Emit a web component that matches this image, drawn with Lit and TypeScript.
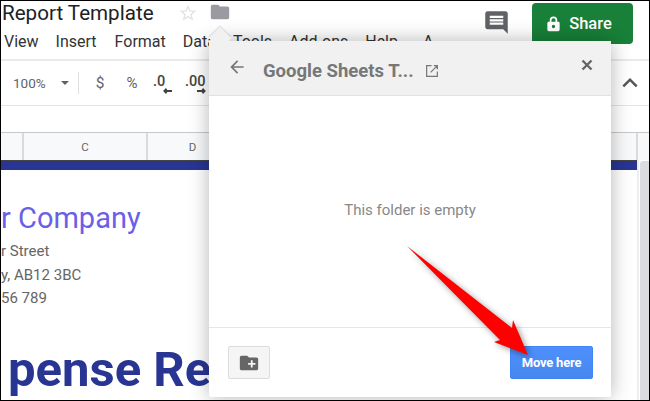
import { LitElement, html, css } from "lit";
import { customElement } from "lit/decorators.js";

@customElement("app-root")
export class AppRoot extends LitElement {
  static styles = css`
    :host { display: block; width: 650px; height: 401px; font-family: Roboto, "Liberation Sans", sans-serif; }
    .frame { position: relative; box-sizing: border-box; width: 650px; height: 401px; border: 1px solid #000; overflow: hidden; background: #fff; display: flex; flex-direction: column; }
    .head { height: 58px; display: flex; flex: none; }
    .head-left { flex: 1; min-width: 0; }
    .title-row { display: flex; align-items: center; height: 24px; }
    .title { font-size: 20.6px; color: #202124; margin-left: 1px; width: 176px; white-space: nowrap; line-height: 24px; }
    .star { width: 20px; height: 20px; color: #e3e3e3; }
    .folder { width: 22px; height: 22px; margin: -2px 0 0 11px; color: #9a9aa0; }
    .menu { display: flex; height: 32px; align-items: center; font-size: 16px; color: #333; white-space: nowrap; padding-top: 1px; box-sizing: border-box; }
    .menu span { flex: none; }
    .head-right { display: flex; flex: none; width: 166px; align-items: flex-start; }
    .comment { width: 27px; height: 27px; margin: 8px 22px 0 0; flex: none; color: #5f6368; }
    .share { flex: none; width: 101px; height: 41px; margin-top: 2px; border-radius: 4px; background: #188038; color: #fff; display: flex; align-items: center; justify-content: center; gap: 9px; font-size: 16.5px; font-weight: 500; box-sizing: border-box; padding-right: 6px; }
    .share svg { width: 13px; height: 16px; }
    .rule { height: 2px; background: #e8eaed; flex: none; }
    .toolbar { height: 44px; flex: none; display: flex; align-items: center; color: #5f6368; font-size: 14px; position: relative; }
    .tb { flex: none; text-align: center; }
    .zoom { margin-left: 12px; width: 36px; text-align: left; font-size: 13.5px; }
    .caret { margin-left: 12px; width: 0; height: 0; border-left: 4.5px solid transparent; border-right: 4.5px solid transparent; border-top: 4.5px solid #5f6368; }
    .sep { width: 1px; height: 22px; background: #e0e0e0; margin-left: 9px; }
    .dollar { margin-left: 14px; width: 14px; font-size: 15.5px; }
    .pct { margin-left: 18px; width: 14px; font-size: 15px; }
    .dec { margin-left: 14px; width: 19px; display: flex; flex-direction: column; line-height: 14px; font-weight: 500; font-size: 14.5px; color: #444; text-align: left; padding-top: 3px; }
    .dec2 { margin-left: 13px; width: 21px; }
    .dec svg { width: 9px; height: 6px; align-self: flex-end; margin-top: -1px; }
    .collapse { margin-left: auto; margin-right: 9px; width: 20px; height: 20px; color: #555; }
    .thin { height: 1px; background: #e4e4e4; flex: none; }
    .formula { height: 26px; flex: none; }
    .cols { height: 27px; flex: none; background: #f8f9fa; border-top: 1px solid #c8c8c8; display: grid; grid-template-columns: 23px 124px 91px 399px 1fr; color: #666; font-size: 11.5px; }
    .col { display: flex; align-items: center; justify-content: center; border-right: 2px solid #dadada; box-sizing: border-box; }
    .col:last-child { border-right: none; }
    .sheet { flex: 1; display: flex; min-height: 0; }
    .doc { flex: none; width: 636px; overflow: hidden; white-space: nowrap; }
    .band { height: 9px; background: #283593; border-top: 1px solid #444; }
    .company { font-size: 29px; color: #6b5fe8; margin-top: 30px; line-height: 36px; }
    .addr { font-size: 15px; color: #666; line-height: 23.5px; margin-top: 4px; }
    .addr div { height: 23.5px; }
    .report { font-size: 49px; font-weight: 700; color: #283593; line-height: 50px; margin: 34px 0 0 7px; }
    .gutter { flex: none; width: 3px; box-sizing: border-box; border-left: 2px solid #eceef0; }
    .bar { flex: none; width: 9px; margin-top: 1px; background: #dadce0; border-radius: 3px 0 0 0; }
    .dialog { position: absolute; left: 208px; top: 40px; width: 402px; height: 356px; background: #fff; box-shadow: 0 0 20px rgba(0,0,0,.3); display: flex; flex-direction: column; border-radius: 2px; }
    .pointer { position: absolute; left: 3px; top: -11px; width: 16px; height: 16px; background: #f1f1f1; transform: rotate(45deg); box-shadow: -1px -1px 1px rgba(0,0,0,.1); }
    .dhead { position: relative; height: 55px; flex: none; background: #f1f1f1; border-bottom: 1px solid #e2e2e2; box-sizing: border-box; display: flex; align-items: center; }
    .back { width: 20px; height: 20px; margin: -2px 0 0 18px; color: #777; flex: none; }
    .dtitle { margin-left: 16px; font-size: 18.5px; font-weight: 700; color: #777; white-space: nowrap; width: 162px; flex: none; padding-top: 6px; }
    .open { width: 12px; height: 12px; color: #777; flex: none; margin: 5px 0 0 1px; }
    .close { width: 14px; height: 14px; margin: -6px 17px 0 auto; color: #666; flex: none; }
    .dbody { flex: 1; display: flex; align-items: center; justify-content: center; color: #888; font-size: 15px; padding-bottom: 4px; }
    .dfoot { height: 70px; flex: none; border-top: 1px solid #e6e6e6; box-sizing: border-box; display: flex; align-items: flex-start; justify-content: space-between; padding: 18px 18px 0 19px; }
    .newfolder { width: 42px; height: 33px; box-sizing: border-box; background: #f5f5f5; border: 1px solid #dcdcdc; border-radius: 2px; display: flex; align-items: center; justify-content: center; color: #666; }
    .newfolder svg { width: 22px; height: 22px; }
    .move { width: 83px; height: 33px; box-sizing: border-box; background: linear-gradient(#4d90fe, #4787ed); border: 1px solid #3f85f5; border-radius: 2px; color: #fff; font-size: 13px; font-weight: 700; display: flex; align-items: center; justify-content: center; letter-spacing: -.2px; }
    .arrow { position: absolute; left: 0; top: 0; width: 650px; height: 401px; filter: drop-shadow(2px 2px 3px rgba(0,0,0,.4)); pointer-events: none; }
  `;

  render() {
    const items: [string, number][] = [["View", 3], ["Insert", 17], ["Format", 18], ["Data", 17], ["Tools", 17], ["Add-ons", 17], ["Help", 17], ["A", 25]];
    return html`<div class="frame">
      <div class="head">
        <div class="head-left">
          <div class="title-row">
            <div class="title">Report Template</div>
            <svg class="star" viewBox="0 0 24 24" fill="currentColor"><path d="M22 9.24l-7.19-.62L12 2 9.19 8.63 2 9.24l5.46 4.73L5.82 21 12 17.27 18.18 21l-1.63-7.03L22 9.24zM12 15.4l-3.76 2.27 1-4.28-3.32-2.88 4.38-.38L12 6.1l1.71 4.04 4.38.38-3.32 2.88 1 4.28L12 15.4z"/></svg>
            <svg class="folder" viewBox="0 0 24 24" fill="currentColor"><path d="M10 4H4c-1.1 0-2 .9-2 2v12c0 1.1.9 2 2 2h16c1.1 0 2-.9 2-2V8c0-1.1-.9-2-2-2h-8l-2-2z"/></svg>
          </div>
          <div class="menu">${items.map(([t, m]) => html`<span style="margin-left:${m}px">${t}</span>`)}</div>
        </div>
        <div class="head-right">
          <svg class="comment" viewBox="0 0 24 24" fill="currentColor"><path d="M22 4c0-1.1-.9-2-2-2H4c-1.1 0-2 .9-2 2v12c0 1.1.9 2 2 2h14l4 4V4zm-4 10H6v-2h12v2zm0-3H6V9h12v2zm0-3H6V6h12v2z"/></svg>
          <div class="share">
            <svg viewBox="0 0 14 17" fill="currentColor"><path fill-rule="evenodd" d="M12 6h-1V4.500a4 4 0 0 0-8 0V6H2a1.600 1.600 0 0 0-1.600 1.600v7.200A1.600 1.600 0 0 0 2 16.400h10a1.600 1.600 0 0 0 1.600-1.600V7.600A1.600 1.600 0 0 0 12 6zM4.800 4.500a2.200 2.200 0 0 1 4.400 0V6H4.800zM7 13a1.800 1.800 0 1 1 0-3.600A1.800 1.800 0 0 1 7 13z"/></svg>
            <span>Share</span>
          </div>
        </div>
      </div>
      <div class="rule"></div>
      <div class="toolbar">
        <span class="tb zoom">100%</span>
        <span class="tb caret"></span>
        <span class="tb sep"></span>
        <span class="tb dollar">$</span>
        <span class="tb pct">%</span>
        <span class="tb dec">.0<svg viewBox="0 0 10 6" fill="none" stroke="#444" stroke-width="2"><path d="M10 3H1.500M4 .5L1.500 3 4 5.500"/></svg></span>
        <span class="tb dec dec2">.00<svg viewBox="0 0 10 6" fill="none" stroke="#444" stroke-width="2"><path d="M0 3h8.500M6 .5L8.500 3 6 5.500"/></svg></span>
        <svg class="collapse" viewBox="0 0 24 24" fill="none" stroke="currentColor" stroke-width="3"><path d="M4 16l8-8 8 8"/></svg>
      </div>
      <div class="thin"></div>
      <div class="formula"></div>
      <div class="cols"><div class="col"></div><div class="col">C</div><div class="col">D</div><div class="col"></div><div class="col"></div></div>
      <div class="sheet">
        <div class="doc">
          <div class="band"></div>
          <div class="company">r Company</div>
          <div class="addr"><div>r Street</div><div>y, AB12 3BC</div><div>56 789</div></div>
          <div class="report">pense Report</div>
        </div>
        <div class="gutter"></div>
        <div class="bar"></div>
      </div>

      <div class="dialog">
        <div class="pointer"></div>
        <div class="dhead">
          <svg class="back" viewBox="0 0 24 24" fill="currentColor"><path d="M20 11H7.830l5.590-5.590L12 4l-8 8 8 8 1.410-1.410L7.830 13H20v-2z"/></svg>
          <div class="dtitle">Google Sheets T...</div>
          <svg class="open" viewBox="0 0 13 13" fill="none" stroke="currentColor" stroke-width="1.300"><path d="M6 .7H.7v11.600h11.600V7M12.300.7L5 8M8.500.7h3.800v3.800"/></svg>
          <svg class="close" viewBox="0 0 14 14" fill="none" stroke="currentColor" stroke-width="2.400"><path d="M2.500 2.500l9 9M11.500 2.500l-9 9"/></svg>
        </div>
        <div class="dbody">This folder is empty</div>
        <div class="dfoot">
          <div class="newfolder"><svg viewBox="0 0 24 24" fill="currentColor"><path d="M20 6h-8l-2-2H4c-1.110 0-1.990.890-1.990 2L2 18c0 1.110.890 2 2 2h16c1.110 0 2-.890 2-2V8c0-1.110-.890-2-2-2zm-1 8h-3v3h-2v-3h-3v-2h3V9h2v3h3v2z"/></svg></div>
          <div class="move">Move here</div>
        </div>
      </div>
      <svg class="arrow" viewBox="1 1 650 401"><path fill="#f00" d="M407 246L512 328L513 320L528 355L494 342L500 340Z"/></svg>
    </div>`;
  }
}
